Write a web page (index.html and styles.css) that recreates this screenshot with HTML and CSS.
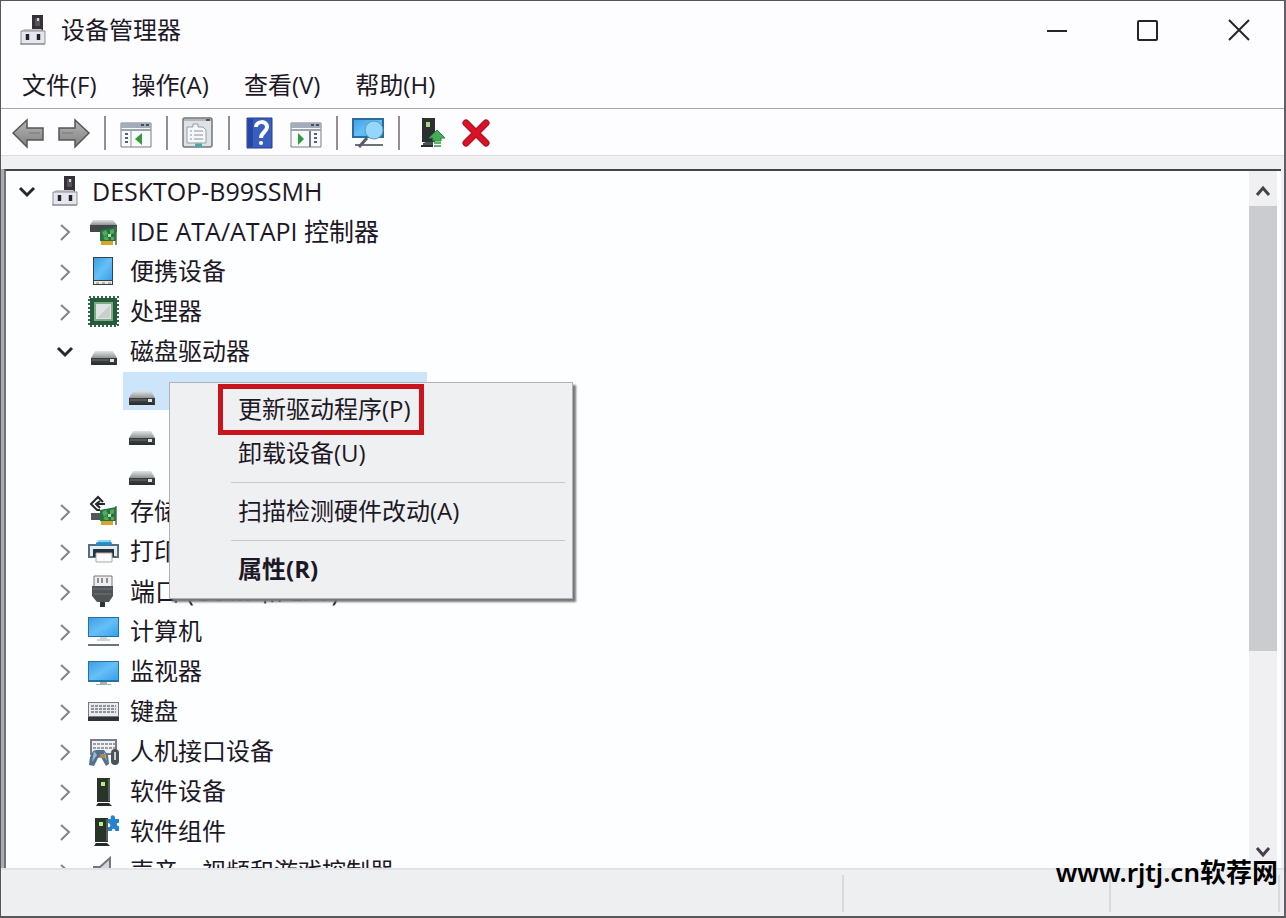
FILE: index.html
```html
<!DOCTYPE html>
<html lang="zh-CN">
<head>
    <meta charset="UTF-8">
    <title>设备管理器</title>
    <meta name="viewport" content="width=device-width, initial-scale=1.0">
    <link rel="stylesheet" href="styles.css">
</head>
<body>
    <svg class="sprite" aria-hidden="true">
        <defs>
            <linearGradient id="metal" x1="0" y1="0" x2="0" y2="1">
                <stop offset="0" stop-color="#e2e3e4"/><stop offset="1" stop-color="#8f9394"/>
            </linearGradient>
            <linearGradient id="screen" x1="0" y1="0" x2="1" y2="1">
                <stop offset="0" stop-color="#3d9fe4"/><stop offset=".5" stop-color="#66bff8"/><stop offset="1" stop-color="#36a0ea"/>
            </linearGradient>
            <linearGradient id="arrow" x1="0" y1="0" x2="0" y2="1">
                <stop offset="0" stop-color="#b5b5b5"/><stop offset="1" stop-color="#818181"/>
            </linearGradient>
            <symbol id="open" viewBox="0 0 32 32">
                <path d="M9 13l7 7 7-7" fill="none" stroke="#29262d" stroke-width="3"/>
            </symbol>
            <symbol id="closed" viewBox="0 0 32 32">
                <path d="M12 10l8 7-8 8" fill="none" stroke="#858387" stroke-width="2"/>
            </symbol>
            <symbol id="manager" viewBox="0 0 32 32">
                <path d="M15 1h11v16H15z" fill="#343237"/>
                <path d="M18 4h5v8h-5z" fill="#565259"/><path d="M20 4h2v3h-2z" fill="#d5d6d9"/>
                <path d="M7 15h17l4 3H4z" fill="#c5c5cb"/>
                <path d="M4 17h24v13H4z" fill="#e6e7ee" stroke="#8e8c99"/>
                <path d="M8 20h5v6H8zM19 20h5v6h-5z" fill="#b9bac4"/>
                <path d="M9 20h3v6H9zM20 20h3v6h-3z" fill="#24232b"/>
                <path d="M3 30h25" stroke="#84828e"/>
            </symbol>
            <symbol id="card" viewBox="0 0 32 32">
                <path d="M13 15l16-3v14H13z" fill="#23753f"/>
                <path d="M15 17l4-2 2 4-4 3zM23 15l4-1v4l-4 2zM16 23l4-2 2 4h-4zM24 22h3v3h-3z" fill="#55a95e"/>
                <path d="M21 19h3v3h-3z" fill="#b7dfae"/>
                <path d="M29 11v19" stroke="#566458" stroke-width="1.5"/>
                <path d="M14 26h12v4H14z" fill="#dda328"/>
            </symbol>
            <symbol id="ide" viewBox="0 0 32 32">
                <path d="M6 5h20l4 5H3z" fill="url(#metal)"/><path d="M3 10h27v7H3z" fill="#42484a"/>
                <use href="#card"/>
            </symbol>
            <symbol id="portable" viewBox="0 0 32 32">
                <path d="M6 2h20v28H6z" fill="#32404a"/><path d="M7 3h18v22H7z" fill="url(#screen)"/>
                <path d="M7 26h18v3H7z" fill="#eeeae1"/><path d="M9 28h3m3 0h3m3 0h3" stroke="#897e70"/>
            </symbol>
            <symbol id="cpu" viewBox="0 0 32 32">
                <path d="M3 3h27v27H3z" fill="#245e39"/>
                <path d="M2 2h29v29H2z" fill="none" stroke="#376348" stroke-width="2" stroke-dasharray="2 2"/>
                <path d="M8 8h17v17H8z" fill="#dfe4e2" stroke="#80a88a" stroke-width="2"/>
                <path d="M10 23L23 10v13z" fill="#c8cfcd"/>
            </symbol>
            <symbol id="disk" viewBox="0 0 32 32">
                <path d="M8 16h18l4 7H4z" fill="url(#metal)"/>
                <path d="M4 23h26v7H4z" fill="#383b3b"/><path d="M5 24h17v2H5z" fill="#555a59"/>
                <path d="M23 24h4v3h-4z" fill="#dce9df"/><path d="M5 29h24" stroke="#222"/>
            </symbol>
            <symbol id="storage" viewBox="0 0 32 32">
                <path d="M4 18h10l8 7H4z" fill="#52595a"/><use href="#card"/>
                <path d="M3 0h15v13H3z" fill="#fdfeff"/>
                <path d="M13 15h-3l-6-6 7-7 5 5M18 9h-9m4-3l-4 3 4 4" fill="none" stroke="#29292c" stroke-width="2"/>
            </symbol>
            <symbol id="printer" viewBox="0 0 32 32">
                <path d="M9 10l3-5h11l3 5z" fill="#2f9ccd"/><path d="M12 5h10l2 2H11z" fill="#8bd7ef"/>
                <path d="M1 9h31v14H1z" fill="#566e7f"/><path d="M3 11h27v10H3z" fill="#e1edf4"/>
                <path d="M6 14h21v8H6z" fill="#26313a"/><path d="M9 18h16v9H9z" fill="#fafafa" stroke="#aaa"/>
                <path d="M9 9h15" stroke="#258cc6" stroke-width="3"/>
            </symbol>
            <symbol id="port" viewBox="0 0 32 32">
                <path d="M7 1h18v11H7z" fill="#eee" stroke="#77797b"/>
                <path d="M11 3v5m4-5v5m5-5v5" stroke="#8b8d90" stroke-width="2"/>
                <path d="M5 11h21v10l-4 6H10l-5-6z" fill="#515456"/><path d="M6 14h19M7 19h17" stroke="#737678"/>
                <path d="M13 27h5v5h-5z" fill="#303336"/>
            </symbol>
            <symbol id="computer" viewBox="0 0 32 32">
                <path d="M1 2h31v20H1z" fill="#27719d"/><path d="M2 3h29v18H2z" fill="url(#screen)"/>
                <path d="M10 25h13m-10-2h7" stroke="#97a8ae"/><path d="M1 30h31" stroke="#6f7476" stroke-width="2"/>
            </symbol>
            <symbol id="monitor" viewBox="0 0 32 32">
                <path d="M1 6h31v21H1z" fill="#2672a0"/><path d="M2 7h29v18H2z" fill="url(#screen)"/>
                <path d="M13 27h7v2h4v1H9v-1h4z" fill="#a4b2b6"/>
            </symbol>
            <symbol id="keys" viewBox="0 0 32 32">
                <path d="M1 7h31v19H1z" fill="#77797d"/><path d="M2 8h29v13H2z" fill="#e9eaee"/>
                <path d="M4 11h25M4 14h25M4 17h25" stroke="#8f9298" stroke-width="2" stroke-dasharray="3 1"/>
                <path d="M1 22h31v4H1z" fill="#303235"/>
            </symbol>
            <symbol id="hid" viewBox="0 0 32 32">
                <path d="M4 5h25v14H4z" fill="#eef0f4" stroke="#777c85" stroke-width="2"/>
                <path d="M6 9h22M6 13h22" stroke="#9a9fa7" stroke-width="2" stroke-dasharray="3 1"/>
                <path d="M6 16l3-1h8l4 5 1 9-3 2-5-9-3 1-4 8-5-1 1-8z" fill="#51728f"/>
                <path d="M7 16l3 4-5 7zM18 17l2 9-4-6z" fill="#9eb9d4"/>
                <path d="M13 19h5v4h-5z" fill="#bc8151"/>
                <rect x="24" y="14" width="8" height="16" rx="4" fill="#4c5259"/><path d="M28 17v8" stroke="#cdd0d1" stroke-width="2"/>
            </symbol>
            <symbol id="tower" viewBox="0 0 32 32">
                <path d="M10 3h13v24H10z" fill="#283329"/><path d="M21 4h2v22h-2z" fill="#53615a"/>
                <path d="M14 7h4v4h-4z" fill="#b6ed7d"/><path d="M11 28h11l3 3H9z" fill="#25292a"/>
            </symbol>
            <symbol id="component" viewBox="0 0 32 32">
                <g transform="translate(-2 0)"><use href="#tower"/></g>
                <path d="M21 4h3c-2-5 5-5 4 0h4v4c-3-1-3 4 0 3v5h-4c1-3-4-3-3 0h-4v-4c3 1 3-4 0-4z" fill="#2482ce"/>
            </symbol>
            <symbol id="speaker" viewBox="0 0 32 32">
                <path d="M7 12h6L23 3v27l-10-9H7z" fill="#d6d5dd" stroke="#777480" stroke-width="2"/>
            </symbol>
        </defs>
    </svg>

    <div class="window">
        <header class="titlebar">
            <svg class="icon"><use href="#manager"/></svg>
            <h1>设备管理器</h1>
            <button class="control" aria-label="最小化"><svg viewBox="0 0 24 24"><path d="M2 13h20" stroke-width="2"/></svg></button>
            <button class="control" aria-label="最大化"><svg viewBox="0 0 24 24"><rect x="2" y="3" width="19" height="19" rx="1" stroke-width="2"/></svg></button>
            <button class="control" aria-label="关闭"><svg viewBox="0 0 24 24"><path d="M2 2l20 20M22 2L2 22" stroke-width="2"/></svg></button>
        </header>

        <nav class="menubar">
            <button>文件(F)</button>
            <button>操作(A)</button>
            <button>查看(V)</button>
            <button>帮助(H)</button>
        </nav>

        <div class="toolbar">
            <button aria-label="后退"><svg viewBox="0 0 32 32"><path d="M1 16L15 3v8h16v12H15v7z" fill="url(#arrow)" stroke="#555" stroke-width="1.5"/><path d="M17 16h11" stroke="#777"/></svg></button>
            <button aria-label="前进"><svg viewBox="0 0 32 32"><path d="M31 16L17 3v8H1v12h16v7z" fill="url(#arrow)" stroke="#555" stroke-width="1.5"/><path d="M4 16h11" stroke="#777"/></svg></button>
            <span class="divider"></span>
            <button aria-label="显示控制台树"><svg viewBox="0 0 32 32"><path d="M1 6h30v24H1z" fill="#f8f9fa" stroke="#777d88"/><path d="M1 6h30v5H1z" fill="#a3acb9"/><path d="M21 8h3m2 0h3" stroke="#46515f" stroke-width="2"/><path d="M1 13h30" stroke="#9ba4b1" stroke-width="2"/><path d="M11 14v16" stroke="#8e949d"/><path d="M5 17h3m-3 4h3m-3 4h3" stroke="#536070" stroke-width="2"/><path d="M22 16v12l-7-6z" fill="#35983f"/></svg></button>
            <span class="divider"></span>
            <button aria-label="属性"><svg viewBox="0 0 32 32"><rect x="1" y="1" width="29" height="29" rx="2" fill="#dfe2e5" stroke="#70757b" stroke-width="1.5"/><path d="M2 3h27" stroke="#b2b7bd" stroke-width="2"/><path d="M24 3h4" stroke="#525861" stroke-width="2"/><path d="M5 10h6V7h5v3h5l3 3v13H5z" fill="#f5f7f8" stroke="#989da4"/><path d="M8 14h2m2 0h9M8 18h2m2 0h9M8 22h2m2 0h9" stroke="#8a9299"/><path d="M13 28h7" stroke="#45a9ac" stroke-width="3"/></svg></button>
            <span class="divider"></span>
            <button aria-label="帮助"><svg viewBox="0 0 32 32"><path d="M3 1h25v30H3z" fill="#385fc0" stroke="#293d82"/><path d="M4 2h5v28H4z" fill="#2548a4"/><path d="M12 10c0-6 11-7 11 0 0 5-6 5-6 11" fill="none" stroke="#fff" stroke-width="4"/><circle cx="17" cy="26" r="2" fill="#fff"/></svg></button>
            <button aria-label="显示操作窗格"><svg viewBox="0 0 32 32"><path d="M1 6h30v24H1z" fill="#f8f9fa" stroke="#777d88"/><path d="M1 6h30v5H1z" fill="#a3acb9"/><path d="M21 8h3m2 0h3" stroke="#46515f" stroke-width="2"/><path d="M1 13h30" stroke="#9ba4b1" stroke-width="2"/><path d="M20 14v16" stroke="#737b86" stroke-width="2"/><path d="M24 17h3m-3 4h3m-3 4h3" stroke="#536070" stroke-width="2"/><path d="M8 16v12l6-6z" fill="#35983f"/></svg></button>
            <span class="divider"></span>
            <button aria-label="扫描检测硬件改动"><svg viewBox="0 0 32 32"><path d="M1 2h30v18H1z" fill="url(#screen)" stroke="#296da0" stroke-width="2"/><path d="M3 28h28" stroke="#6a737c" stroke-width="2"/><path d="M15 21L7 30" stroke="#535c68" stroke-width="3"/><circle cx="22" cy="13" r="9" fill="#94d7fa" stroke="#5599c4"/></svg></button>
            <span class="divider"></span>
            <button aria-label="更新驱动程序"><svg viewBox="0 0 32 32"><path d="M8 1h13v24H8z" fill="#2b3130"/><path d="M12 5h4v5h-4z" fill="#abd68a"/><path d="M12 25h7v3H9v-2z" fill="#4c504f"/><path d="M7 29h12" stroke="#292d2c" stroke-width="2"/><path d="M23 13l8 8h-4v3h-8v-3h-4z" fill="#45ae55" stroke="#32854a"/><path d="M20 26h7m-7 3h7" stroke="#5ab56a" stroke-width="2"/></svg></button>
            <button aria-label="卸载设备"><svg viewBox="0 0 32 32"><g stroke-linecap="round"><path d="M6 6l20 20M26 6L6 26" stroke="#a80e22" stroke-width="7"/><path d="M6 6l20 20M26 6L6 26" stroke="#d91325" stroke-width="5"/></g></svg></button>
        </div>

        <main class="content">
            <ul class="tree">
                <li>
                    <div class="row"><button class="twisty" aria-label="折叠"><svg><use href="#open"/></svg></button><span class="node latin"><svg class="icon"><use href="#manager"/></svg>DESKTOP-B99SSMH</span></div>
                    <ul>
                        <li><div class="row"><button class="twisty" aria-label="展开"><svg><use href="#closed"/></svg></button><span class="node latin"><svg class="icon"><use href="#ide"/></svg>IDE ATA/ATAPI 控制器</span></div></li>
                        <li><div class="row"><button class="twisty" aria-label="展开"><svg><use href="#closed"/></svg></button><span class="node"><svg class="icon"><use href="#portable"/></svg>便携设备</span></div></li>
                        <li><div class="row"><button class="twisty" aria-label="展开"><svg><use href="#closed"/></svg></button><span class="node"><svg class="icon"><use href="#cpu"/></svg>处理器</span></div></li>
                        <li>
                            <div class="row"><button class="twisty" aria-label="折叠"><svg><use href="#open"/></svg></button><span class="node"><svg class="icon"><use href="#disk"/></svg>磁盘驱动器</span></div>
                            <ul>
                                <li><div class="row leaf"><span class="node latin selected"><svg class="icon"><use href="#disk"/></svg>Colorful</span></div></li>
                                <li><div class="row leaf"><span class="node"><svg class="icon"><use href="#disk"/></svg></span></div></li>
                                <li><div class="row leaf"><span class="node"><svg class="icon"><use href="#disk"/></svg></span></div></li>
                            </ul>
                        </li>
                        <li><div class="row"><button class="twisty" aria-label="展开"><svg><use href="#closed"/></svg></button><span class="node"><svg class="icon"><use href="#storage"/></svg>存储控制器</span></div></li>
                        <li><div class="row"><button class="twisty" aria-label="展开"><svg><use href="#closed"/></svg></button><span class="node"><svg class="icon"><use href="#printer"/></svg>打印队列</span></div></li>
                        <li><div class="row"><button class="twisty" aria-label="展开"><svg><use href="#closed"/></svg></button><span class="node latin"><svg class="icon"><use href="#port"/></svg>端口 (COM 和 LPT)</span></div></li>
                        <li><div class="row"><button class="twisty" aria-label="展开"><svg><use href="#closed"/></svg></button><span class="node"><svg class="icon"><use href="#computer"/></svg>计算机</span></div></li>
                        <li><div class="row"><button class="twisty" aria-label="展开"><svg><use href="#closed"/></svg></button><span class="node"><svg class="icon"><use href="#monitor"/></svg>监视器</span></div></li>
                        <li><div class="row"><button class="twisty" aria-label="展开"><svg><use href="#closed"/></svg></button><span class="node"><svg class="icon"><use href="#keys"/></svg>键盘</span></div></li>
                        <li><div class="row"><button class="twisty" aria-label="展开"><svg><use href="#closed"/></svg></button><span class="node"><svg class="icon"><use href="#hid"/></svg>人机接口设备</span></div></li>
                        <li><div class="row"><button class="twisty" aria-label="展开"><svg><use href="#closed"/></svg></button><span class="node"><svg class="icon"><use href="#tower"/></svg>软件设备</span></div></li>
                        <li><div class="row"><button class="twisty" aria-label="展开"><svg><use href="#closed"/></svg></button><span class="node"><svg class="icon"><use href="#component"/></svg>软件组件</span></div></li>
                        <li><div class="row"><button class="twisty" aria-label="展开"><svg><use href="#closed"/></svg></button><span class="node"><svg class="icon"><use href="#speaker"/></svg>声音、视频和游戏控制器</span></div></li>
                    </ul>
                </li>
            </ul>
            <div class="scrollbar">
                <button aria-label="向上滚动"><svg viewBox="0 0 28 32"><path d="M8 22l6-7 6 7"/></svg></button>
                <div class="track"><div class="thumb"></div></div>
                <button aria-label="向下滚动"><svg viewBox="0 0 28 32"><path d="M8 13l6 7 6-7"/></svg></button>
            </div>
        </main>

        <footer class="statusbar">
            <div class="pane main-pane"></div>
            <div class="pane"></div>
            <div class="pane small-pane"></div>
        </footer>
    </div>

    <div class="context-menu">
        <button class="marked">更新驱动程序(P)</button>
        <button>卸载设备(U)</button>
        <hr>
        <button>扫描检测硬件改动(A)</button>
        <hr>
        <button class="default">属性(R)</button>
    </div>

    <div class="watermark">www.rjtj.cn软荐网</div>
</body>
</html>
```
FILE: styles.css
```css
*,
*::after {
    box-sizing: border-box;
}
body {
    margin: 0;
    font-family: "Open Sans", "Noto Sans CJK SC", sans-serif;
    font-size: 24px;
    line-height: 32px;
    color: #1d1826;
    background-color: #f0f0f2;
}
button {
    padding: 0;
    border: none;
    background: none;
    font: inherit;
    color: inherit;
}
svg {
    display: block;
}
ul {
    list-style: none;
    margin: 0;
    padding: 0;
}
.sprite {
    position: absolute;
    width: 0;
    height: 0;
}
.icon {
    width: 32px;
    height: 32px;
    flex: none;
}
.window {
    display: flex;
    flex-direction: column;
    height: 100vh;
    border: 1px solid #57545b;
    border-right: 2px solid #665c6c;
    border-bottom: 2px solid #58585b;
    overflow: hidden;
}

/* title and menus */
.titlebar {
    display: flex;
    align-items: center;
    height: 58px;
    flex: none;
    padding-left: 16px;
    background-color: #fdfdff;
}
.titlebar h1 {
    flex: 1;
    margin: 0 0 0 12px;
    font-size: 24px;
    font-weight: normal;
}
.control {
    display: flex;
    align-items: center;
    justify-content: center;
    width: 91px;
    height: 58px;
}
.control svg {
    width: 24px;
    height: 24px;
    fill: none;
    stroke: #26232a;
}
.menubar {
    display: flex;
    align-items: center;
    gap: 35px;
    height: 49px;
    flex: none;
    padding: 2px 21px 0;
    background-color: #fdfdff;
}
.toolbar {
    display: flex;
    align-items: center;
    gap: 14px;
    height: 48px;
    flex: none;
    padding: 2px 11px 0;
    border-top: 1px solid #a4a4a9;
    border-bottom: 1px solid #dcdce0;
    background-color: #fdfdff;
}
.toolbar svg {
    width: 32px;
    height: 32px;
}
.divider {
    width: 2px;
    height: 34px;
    background-color: #928d98;
}

/* device tree */
.content {
    display: flex;
    flex: 1;
    min-height: 0;
    margin: 13px 3px 0;
    border-top: 2px solid #424649;
    border-left: 2px solid #737277;
    box-shadow: -3px 0 0 #a9aab2;
    background-color: #fdfeff;
}
.tree {
    flex: 1;
    min-width: 0;
    overflow: hidden;
    padding-left: 5px;
}
.tree ul {
    padding-left: 38px;
}
.row {
    display: flex;
    align-items: center;
    gap: 4px;
    height: 40px;
    white-space: nowrap;
}
.leaf {
    padding-left: 36px;
}
.twisty,
.twisty svg {
    width: 32px;
    height: 32px;
}
.node {
    display: flex;
    align-items: center;
    gap: 11px;
    height: 38px;
    padding-left: 2px;
}
.latin {
    font-size: 25px;
}
.selected {
    min-width: 304px;
    background-color: #cce5fb;
}
.scrollbar {
    display: flex;
    flex-direction: column;
    width: 28px;
    margin-right: 4px;
    background-color: #f0f0f2;
}
.scrollbar button {
    height: 35px;
    flex: none;
}
.scrollbar svg {
    width: 28px;
    height: 32px;
    fill: none;
    stroke: #45404a;
    stroke-width: 3px;
}
.track {
    flex: 1;
}
.thumb {
    height: 71%;
    background-color: #cbcccf;
}

.statusbar {
    display: flex;
    height: 48px;
    flex: none;
    padding: 5px 4px 4px;
    border-top: 2px solid #e0e3e8;
    background-color: #eeeff1;
}
.pane {
    flex: 266;
    border-right: 2px solid #d8d9dd;
}
.main-pane {
    flex: 841;
}
.small-pane {
    flex: 168;
}

/* context menu over the tree */
.context-menu {
    position: absolute;
    left: 169px;
    top: 382px;
    width: 404px;
    padding: 5px 7px 6px;
    border: 1px solid #b0b0b5;
    background-color: #eff0f2;
    box-shadow: 3px 3px 2px #77777c;
}
.context-menu button {
    position: relative;
    display: block;
    width: 100%;
    height: 44px;
    padding: 0 0 2px 61px;
    text-align: left;
}
.context-menu hr {
    height: 1px;
    margin: 6px 0 7px 54px;
    border: none;
    background-color: #c7c8cc;
}
.context-menu .default {
    font-weight: bold;
}
.context-menu .marked::after {
    content: "";
    position: absolute;
    left: 41px;
    top: -4px;
    width: 206px;
    height: 51px;
    border: 5px solid #c9141d;
}

.watermark {
    position: absolute;
    right: 8px;
    bottom: 30px;
    font-family: "Noto Sans", "Noto Sans CJK SC", sans-serif;
    font-size: 26px;
    font-weight: 600;
    color: #000;
}
```
